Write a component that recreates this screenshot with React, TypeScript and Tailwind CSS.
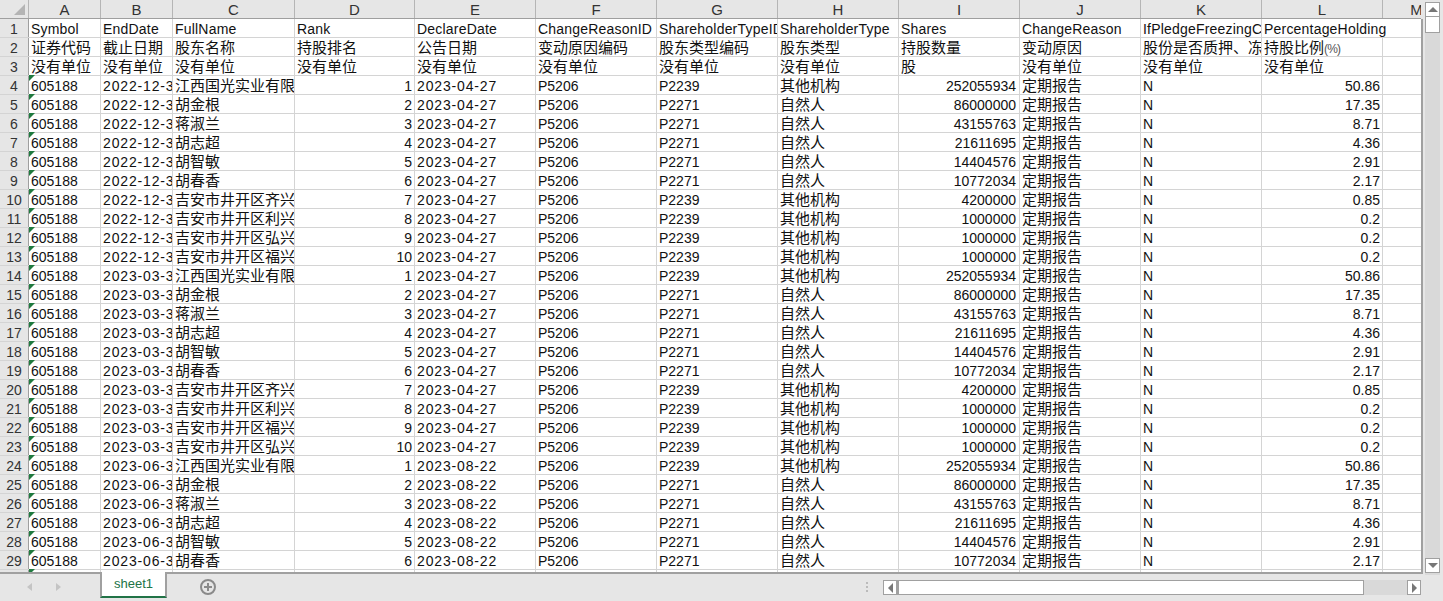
const COLS = [
  { l: "A", w: 72 },
  { l: "B", w: 72 },
  { l: "C", w: 122 },
  { l: "D", w: 120 },
  { l: "E", w: 121 },
  { l: "F", w: 121 },
  { l: "G", w: 121 },
  { l: "H", w: 121 },
  { l: "I", w: 121 },
  { l: "J", w: 121 },
  { l: "K", w: 121 },
  { l: "L", w: 121 },
  { l: "M", w: 68 },
];

const HEAD = [
  ["Symbol", "EndDate", "FullName", "Rank", "DeclareDate", "ChangeReasonID", "ShareholderTypeID", "ShareholderType", "Shares", "ChangeReason", "IfPledgeFreezingCode", "PercentageHolding", ""],
  ["证券代码", "截止日期", "股东名称", "持股排名", "公告日期", "变动原因编码", "股东类型编码", "股东类型", "持股数量", "变动原因", "股份是否质押、冻结", "持股比例(%)", ""],
  ["没有单位", "没有单位", "没有单位", "没有单位", "没有单位", "没有单位", "没有单位", "没有单位", "股", "没有单位", "没有单位", "没有单位", ""],
];

const HOLDERS = [
  ["江西国光实业有限公司", 252055934, "50.86", 1],
  ["胡金根", 86000000, "17.35", 0],
  ["蒋淑兰", 43155763, "8.71", 0],
  ["胡志超", 21611695, "4.36", 0],
  ["胡智敏", 14404576, "2.91", 0],
  ["胡春香", 10772034, "2.17", 0],
  ["吉安市井开区齐兴企业", 4200000, "0.85", 1],
  ["吉安市井开区利兴企业", 1000000, "0.2", 1],
  ["吉安市井开区弘兴企业", 1000000, "0.2", 1],
  ["吉安市井开区福兴企业", 1000000, "0.2", 1],
] as const;

function buildRows() {
  const rows: { end: string; dec: string; h: (typeof HOLDERS)[number]; rank: number }[] = [];
  HOLDERS.forEach((h, i) => rows.push({ end: "2022-12-31", dec: "2023-04-27", h, rank: i + 1 }));
  const q1 = [0, 1, 2, 3, 4, 5, 6, 7, 9, 8];
  q1.forEach((k, i) => rows.push({ end: "2023-03-31", dec: "2023-04-27", h: HOLDERS[k], rank: i + 1 }));
  HOLDERS.slice(0, 6).forEach((h, i) => rows.push({ end: "2023-06-30", dec: "2023-08-22", h, rank: i + 1 }));
  return rows;
}

function Cell({
  w,
  right,
  cjk,
  date,
  label,
  spill,
  wide,
  children,
}: {
  w: number;
  right?: boolean;
  cjk?: boolean;
  date?: boolean;
  label?: boolean;
  spill?: boolean;
  wide?: boolean;
  children?: React.ReactNode;
}) {
  return (
    <div
      style={{ width: w }}
      className={`shrink-0 h-full whitespace-nowrap border-r ${label ? "leading-[21px]" : "leading-[20px]"} ${
        spill ? "overflow-visible border-r-transparent" : "overflow-hidden border-[#d4d4d4]"
      } ${right ? (wide ? "text-right pr-[3px]" : "text-right pr-[2px]") : "pl-[2px]"} ${
        cjk ? "text-[15px]" : "text-[14px]"
      } ${date ? "tracking-[0.85px]" : ""} ${label ? "tracking-[0.2px]" : ""}`}
    >
      {children}
    </div>
  );
}

function Tick() {
  return (
    <div className="absolute left-0 top-[-1px] w-0 h-0 border-t-[6px] border-r-[6px] border-t-[#1f7a3f] border-r-transparent" />
  );
}

function Row({ n, children }: { n?: number; children: React.ReactNode }) {
  return (
    <div className="flex h-[19px] shrink-0 border-b border-[#d4d4d4] box-border">
      <div className="shrink-0 w-[29px] h-full bg-[#e6e6e6] border-r border-[#9f9f9f] text-center text-[14px] text-[#333] leading-[21px]">
        {n}
      </div>
      {children}
    </div>
  );
}

export default function App() {
  const rows = buildRows();
  return (
    <div
      className="w-[1443px] h-[601px] flex flex-col overflow-hidden bg-[#e6e6e6] text-[#111]"
      style={{ fontFamily: '"Liberation Sans", "Noto Sans CJK SC", sans-serif' }}
    >
      <div className="flex h-[574px] shrink-0">
        <div className="w-[1423px] shrink-0 flex flex-col">
          {/* column header */}
          <div className="flex w-[1421px] h-[19px] shrink-0 overflow-hidden bg-[#e6e6e6] border-b border-[#9f9f9f]">
            <div className="relative shrink-0 w-[29px] h-full border-r border-[#b5b5b5]">
              <div className="absolute right-[3px] bottom-[3px] w-0 h-0 border-l-[11px] border-b-[11px] border-l-transparent border-b-[#b4b4b4]" />
            </div>
            {COLS.map((c) => (
              <div
                key={c.l}
                style={{ width: c.w }}
                className="shrink-0 text-center text-[15px] text-[#333] leading-[20px] border-r border-[#b5b5b5]"
              >
                {c.l}
              </div>
            ))}
          </div>

          <div className="flex-1 flex flex-col min-h-0 overflow-hidden bg-white border-r-2 border-b-2 border-[#a0a0a0]">
            {/* label rows */}
            {HEAD.map((r, i) => (
              <Row key={i} n={i + 1}>
                {r.map((t, j) => (
                  <Cell
                    key={j}
                    w={COLS[j].w}
                    cjk={i > 0}
                    label={i === 0}
                    spill={t === "PercentageHolding"}
                  >
                    {t === "持股比例(%)" ? (
                      <>
                        持股比例<span className="text-[12px] tracking-[-0.8px] text-[#555]">(%)</span>
                      </>
                    ) : (
                      t
                    )}
                  </Cell>
                ))}
              </Row>
            ))}

            {/* data rows */}
            {rows.map((r, i) => (
              <Row key={i} n={i + 4}>
                <div style={{ width: COLS[0].w }} className="relative shrink-0 h-full">
                  <Tick />
                  <Cell w={COLS[0].w}>605188</Cell>
                </div>
                <Cell w={COLS[1].w} date>{r.end}</Cell>
                <Cell w={COLS[2].w} cjk>{r.h[0]}</Cell>
                <Cell w={COLS[3].w} right>{r.rank}</Cell>
                <Cell w={COLS[4].w} date>{r.dec}</Cell>
                <Cell w={COLS[5].w}>P5206</Cell>
                <Cell w={COLS[6].w}>{r.h[3] ? "P2239" : "P2271"}</Cell>
                <Cell w={COLS[7].w} cjk>{r.h[3] ? "其他机构" : "自然人"}</Cell>
                <Cell w={COLS[8].w} right wide>{r.h[1]}</Cell>
                <Cell w={COLS[9].w} cjk>定期报告</Cell>
                <Cell w={COLS[10].w}>N</Cell>
                <Cell w={COLS[11].w} right>{r.h[2]}</Cell>
                <Cell w={COLS[12].w} />
              </Row>
            ))}

            {/* row 30 only peeks in above the tab bar */}
            <Row>
              <div style={{ width: COLS[0].w }} className="relative shrink-0 h-full">
                <Tick />
                <Cell w={COLS[0].w} />
              </div>
              {COLS.slice(1).map((c) => (
                <Cell key={c.l} w={c.w} />
              ))}
            </Row>
          </div>
        </div>

        {/* vertical scrollbar */}
        <div className="ml-[2px] w-[15px] h-[573px] mt-[2px] shrink-0 flex flex-col bg-[#d9d9d9] box-border pb-[2px]">
          <div className="h-[15px] bg-white border border-[#a0a0a0] flex items-center justify-center shrink-0">
            <div className="w-0 h-0 border-x-[5px] border-b-[5px] border-x-transparent border-b-[#777]" />
          </div>
          <div className="h-[16px] bg-white border border-t-0 border-[#a0a0a0] shrink-0" />
          <div className="flex-1" />
          <div className="h-[15px] bg-white border border-[#a0a0a0] flex items-center justify-center shrink-0">
            <div className="w-0 h-0 border-x-[5px] border-t-[5px] border-x-transparent border-t-[#777]" />
          </div>
        </div>
      </div>

      {/* sheet tabs + horizontal scrollbar */}
      <div className="flex-1 flex items-start">
        <div className="w-[100px] shrink-0 flex items-center gap-[24px] pl-[27px] pt-[9px]">
          <div className="w-0 h-0 border-y-[4px] border-r-[5px] border-y-transparent border-r-[#c4c4c4]" />
          <div className="w-0 h-0 border-y-[4px] border-l-[5px] border-y-transparent border-l-[#c4c4c4]" />
        </div>
        <div className="w-[67px] h-[26px] -mt-[2px] relative shrink-0 bg-white border-x-2 border-[#a0a0a0] border-b-2 border-b-[#217346] text-center text-[13px] text-[#217346] leading-[24px]">
          sheet1
        </div>
        <div className="ml-[33px] mt-[5px] w-[16px] h-[16px] rounded-full border-2 border-[#8a8a8a] flex items-center justify-center relative shrink-0">
          <div className="absolute w-[8px] h-[2px] bg-[#8a8a8a]" />
          <div className="absolute w-[2px] h-[8px] bg-[#8a8a8a]" />
        </div>
        <div className="ml-[650px] mt-[8px] flex gap-[2px] flex-col shrink-0">
          <div className="w-[2px] h-[2px] bg-[#bbb]" />
          <div className="w-[2px] h-[2px] bg-[#bbb]" />
          <div className="w-[2px] h-[2px] bg-[#bbb]" />
        </div>
        <div className="ml-[15px] mt-[6px] w-[14px] h-[15px] bg-white border border-[#a0a0a0] flex items-center justify-center shrink-0">
          <div className="w-0 h-0 border-y-[5px] border-r-[5px] border-y-transparent border-r-[#777]" />
        </div>
        <div className="mt-[6px] w-[467px] h-[15px] bg-white border border-l-2 border-[#a0a0a0] shrink-0" />
        <div className="mt-[6px] w-[43px] h-[15px] bg-[#d9d9d9] shrink-0" />
        <div className="mt-[6px] w-[14px] h-[15px] bg-white border border-[#a0a0a0] flex items-center justify-center shrink-0">
          <div className="w-0 h-0 border-y-[5px] border-l-[5px] border-y-transparent border-l-[#777]" />
        </div>
      </div>
    </div>
  );
}
